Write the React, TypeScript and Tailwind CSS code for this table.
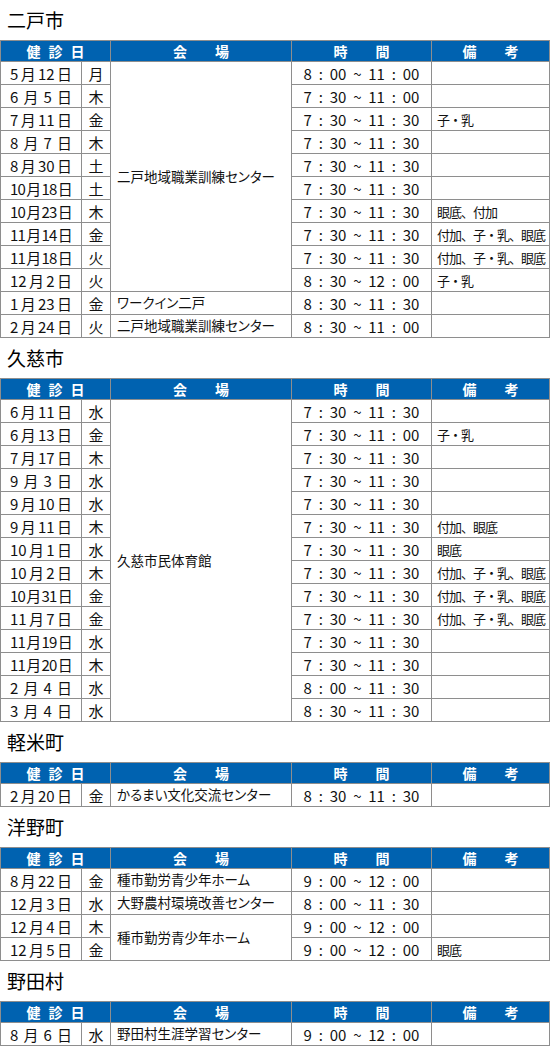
import React from "react";

type Row = {
  m: string;
  d: string;
  w: string;
  venue?: string;
  span?: number;
  time: string;
  note?: string;
};

type Section = { name: string; rows: Row[] };

const sections: Section[] = [
  {
    name: "二戸市",
    rows: [
      { m: "5", d: "12", w: "月", venue: "二戸地域職業訓練センター", span: 10, time: "8：00～11：00" },
      { m: "6", d: "5", w: "木", time: "7：30～11：00" },
      { m: "7", d: "11", w: "金", time: "7：30～11：30", note: "子・乳" },
      { m: "8", d: "7", w: "木", time: "7：30～11：30" },
      { m: "8", d: "30", w: "土", time: "7：30～11：30" },
      { m: "10", d: "18", w: "土", time: "7：30～11：30" },
      { m: "10", d: "23", w: "木", time: "7：30～11：30", note: "眼底、付加" },
      { m: "11", d: "14", w: "金", time: "7：30～11：30", note: "付加、子・乳、眼底" },
      { m: "11", d: "18", w: "火", time: "7：30～11：30", note: "付加、子・乳、眼底" },
      { m: "12", d: "2", w: "火", time: "8：30～12：00", note: "子・乳" },
      { m: "1", d: "23", w: "金", venue: "ワークイン二戸", time: "8：30～11：30" },
      { m: "2", d: "24", w: "火", venue: "二戸地域職業訓練センター", time: "8：30～11：00" },
    ],
  },
  {
    name: "久慈市",
    rows: [
      { m: "6", d: "11", w: "水", venue: "久慈市民体育館", span: 14, time: "7：30～11：30" },
      { m: "6", d: "13", w: "金", time: "7：30～11：00", note: "子・乳" },
      { m: "7", d: "17", w: "木", time: "7：30～11：30" },
      { m: "9", d: "3", w: "水", time: "7：30～11：30" },
      { m: "9", d: "10", w: "水", time: "7：30～11：30" },
      { m: "9", d: "11", w: "木", time: "7：30～11：30", note: "付加、眼底" },
      { m: "10", d: "1", w: "水", time: "7：30～11：30", note: "眼底" },
      { m: "10", d: "2", w: "木", time: "7：30～11：30", note: "付加、子・乳、眼底" },
      { m: "10", d: "31", w: "金", time: "7：30～11：30", note: "付加、子・乳、眼底" },
      { m: "11", d: "7", w: "金", time: "7：30～11：30", note: "付加、子・乳、眼底" },
      { m: "11", d: "19", w: "水", time: "7：30～11：30" },
      { m: "11", d: "20", w: "木", time: "7：30～11：30" },
      { m: "2", d: "4", w: "水", time: "8：00～11：30" },
      { m: "3", d: "4", w: "水", time: "8：30～11：30" },
    ],
  },
  {
    name: "軽米町",
    rows: [
      { m: "2", d: "20", w: "金", venue: "かるまい文化交流センター", time: "8：30～11：30" },
    ],
  },
  {
    name: "洋野町",
    rows: [
      { m: "8", d: "22", w: "金", venue: "種市勤労青少年ホーム", time: "9：00～12：00" },
      { m: "12", d: "3", w: "水", venue: "大野農村環境改善センター", time: "8：00～11：30" },
      { m: "12", d: "4", w: "木", venue: "種市勤労青少年ホーム", span: 2, time: "9：00～12：00" },
      { m: "12", d: "5", w: "金", time: "9：00～12：00", note: "眼底" },
    ],
  },
  {
    name: "野田村",
    rows: [
      { m: "8", d: "6", w: "水", venue: "野田村生涯学習センター", time: "9：00～12：00" },
    ],
  },
];

const font = "font-['Noto_Sans_CJK_JP','Noto_Sans',sans-serif]";

function DateText({ m, d }: { m: string; d: string }) {
  const long = m.length + d.length >= 4;
  return (
    <div className={`mx-auto flex w-[62px] justify-between ${long ? "tracking-[-0.8px]" : ""}`}>
      <span>{m}</span>
      <span>月</span>
      <span>{d}</span>
      <span>日</span>
    </div>
  );
}

function TimeText({ t }: { t: string }) {
  const [a, b] = t.split("～");
  const [h1, m1] = a.split("：");
  const [h2, m2] = b.split("：");
  return (
    <div className="mx-auto flex w-[116px] items-center justify-between">
      <span>{h1}</span>
      <span>:</span>
      <span>{m1}</span>
      <span>~</span>
      <span>{h2}</span>
      <span>:</span>
      <span>{m2}</span>
    </div>
  );
}

function Table({ rows }: { rows: Row[] }) {
  const cell = "border border-[#8e8e8e] h-[23px] p-0 leading-none";
  const head = "border border-[#8e8e8e] h-[21px] p-0 text-white font-bold text-[14px] leading-none";
  return (
    <table className="w-[549px] table-fixed border-collapse text-[15px] text-[#111]">
      <colgroup>
        <col className="w-[81px]" />
        <col className="w-[29px]" />
        <col className="w-[181px]" />
        <col className="w-[140px]" />
        <col className="w-[118px]" />
      </colgroup>
      <thead>
        <tr className="bg-[#0062b0]">
          <th colSpan={2} className={head}>
            <span className="pl-[8px] tracking-[8px]">健診日</span>
          </th>
          <th className={head}>会　　場</th>
          <th className={head}>時　　間</th>
          <th className={head}>備　　考</th>
        </tr>
      </thead>
      <tbody>
        {rows.map((r, i) => (
          <tr key={i}>
            <td className={cell}>
              <DateText m={r.m} d={r.d} />
            </td>
            <td className={`${cell} text-center`}>{r.w}</td>
            {r.venue !== undefined && (
              <td
                rowSpan={r.span ?? 1}
                className={`${cell} whitespace-nowrap pl-[6px] text-[13.5px] [font-feature-settings:'palt']`}
              >
                {r.venue}
              </td>
            )}
            <td className={cell}>
              <TimeText t={r.time} />
            </td>
            <td className={`${cell} whitespace-nowrap pl-[5px] text-[13px] tracking-[-1px]`}>
              {r.note ?? ""}
            </td>
          </tr>
        ))}
      </tbody>
    </table>
  );
}

export default function App() {
  return (
    <div className={`min-h-screen bg-white ${font}`}>
      {sections.map((s) => (
        <section key={s.name}>
          <h2 className="flex h-[40px] items-center pl-[7px] text-[19px] font-normal text-black">
            {s.name}
          </h2>
          <Table rows={s.rows} />
        </section>
      ))}
    </div>
  );
}
